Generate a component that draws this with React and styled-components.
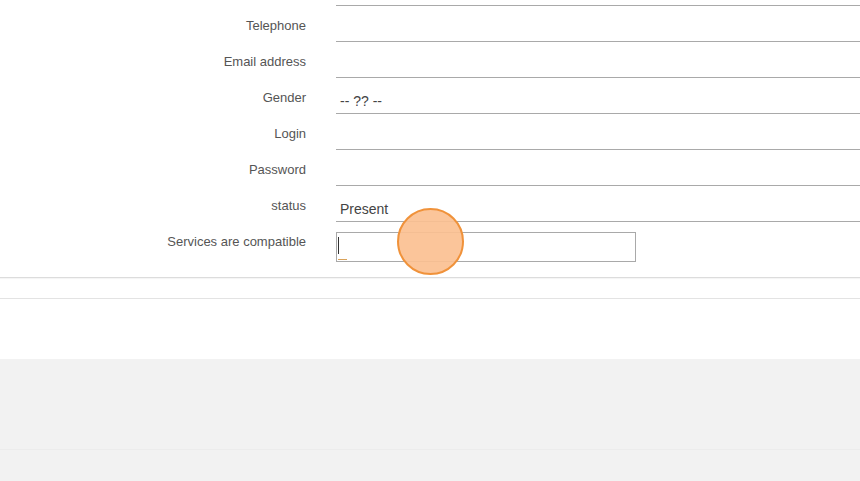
import React from 'react';
import styled, { createGlobalStyle } from 'styled-components';

const GlobalStyle = createGlobalStyle`
	html, body {
		margin: 0;
		padding: 0;
		background: #fff;
		font-family: 'Liberation Sans', Arial, sans-serif;
		overflow: hidden;
	}
`;

// first entry is the row scrolled just above the top edge
const fields = [
	{ id: 'name', label: '', value: '' },
	{ id: 'phone', label: 'Telephone', value: '' },
	{ id: 'email', label: 'Email address', value: '' },
	{ id: 'gender', label: 'Gender', value: '-- ?? --' },
	{ id: 'login', label: 'Login', value: '' },
	{ id: 'password', label: 'Password', value: '' },
	{ id: 'status', label: 'status', value: 'Present' },
];

export default function App() {
	return (
		<Page>
			<GlobalStyle />
			<FormPanel>
				<Fields>
					{fields.map((f) => (
						<Row key={f.id}>
							<Label>{f.label}</Label>
							<Value>{f.value}</Value>
						</Row>
					))}
					<BoxRow>
						<Label>Services are compatible</Label>
						<BoxCell>
							<TextBox>
								<Caret />
								<CaretMark />
							</TextBox>
							<ClickMark />
						</BoxCell>
					</BoxRow>
				</Fields>
			</FormPanel>
			<Actions />
			<Spacer />
			<Footer>
				<FooterBar />
			</Footer>
		</Page>
	);
}

const Page = styled.div`
	width: 860px;
	height: 481px;
	overflow: hidden;
	display: flex;
	flex-direction: column;
`;

const FormPanel = styled.section`
	border-bottom: 1px solid #dcdcdc;
	box-shadow: 0 1px 1px rgba(0, 0, 0, 0.04);
	padding-bottom: 15px;
`;

const Fields = styled.div`
	margin-top: -30px;
	display: flex;
	flex-direction: column;
`;

const Row = styled.div`
	display: grid;
	grid-template-columns: 306px 1fr;
	column-gap: 30px;
	height: 36px;
`;

const Label = styled.label`
	font-size: 13px;
	color: #555;
	text-align: right;
	padding-top: 12px;
`;

const Value = styled.div`
	border-bottom: 1px solid #a9a9a9;
	font-size: 14px;
	color: #444;
	padding: 15px 0 0 4px;
	box-sizing: border-box;
`;

const BoxRow = styled(Row)`
	height: 40px;
`;

const BoxCell = styled.div`
	position: relative;
	padding-top: 10px;
`;

const TextBox = styled.div`
	position: relative;
	width: 300px;
	height: 30px;
	box-sizing: border-box;
	border: 1px solid #a9a9a9;
	background: #fff;
`;

const Caret = styled.span`
	position: absolute;
	left: 1px;
	top: 4px;
	width: 1px;
	height: 17px;
	background: #333;
`;

const CaretMark = styled.span`
	position: absolute;
	left: 1px;
	bottom: 1px;
	width: 9px;
	height: 1px;
	background: #d9a25a;
`;

const ClickMark = styled.span`
	position: absolute;
	left: 61px;
	top: -14px;
	width: 63px;
	height: 63px;
	border-radius: 50%;
	background: rgba(251, 192, 145, 0.92);
	border: 2px solid #f0923a;
`;

const Actions = styled.div`
	height: 20px;
	border-bottom: 1px solid #e3e3e3;
`;

const Spacer = styled.div`
	height: 60px;
`;

const Footer = styled.footer`
	flex: 1;
	background: #f2f2f2;
	padding-top: 90px;
`;

const FooterBar = styled.div`
	border-top: 1px solid #ececec;
`;
